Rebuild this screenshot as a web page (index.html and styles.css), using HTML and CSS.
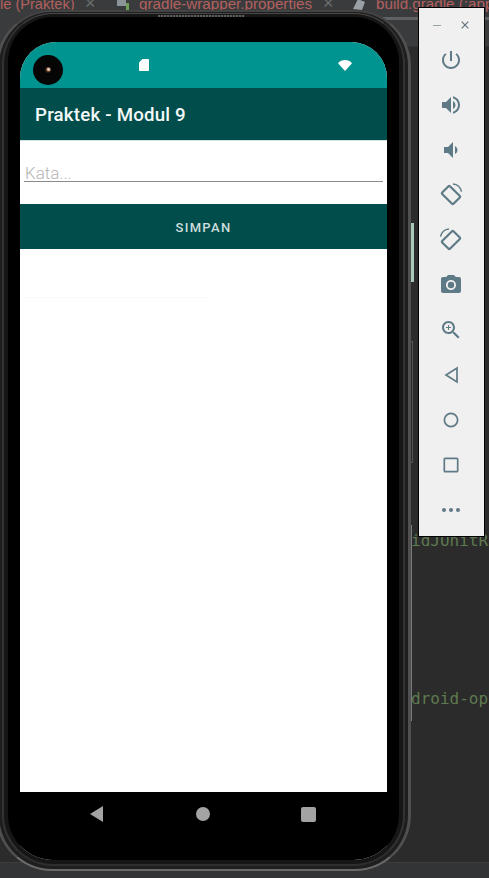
FILE: index.html
```html
<!DOCTYPE html>
<html>
<head>
    <title>Praktek - Modul 9</title>
    <link rel="stylesheet" href="styles.css">
</head>
<body>
    <div class="tabs">
        <span class="tab tab-first">le (Praktek)</span>
        <span class="tab-close close-first">&times;</span>
        <svg class="tab-icon" viewBox="0 0 14 14"><rect x="0" y="1" width="9" height="8" fill="#8a9499"/><rect x="9" y="6" width="3" height="8" fill="#6f9e55"/></svg>
        <span class="tab tab-second">gradle-wrapper.properties</span>
        <span class="tab-close close-second">&times;</span>
        <svg class="tab-icon icon-last" viewBox="0 0 14 14"><path d="M1 12L6 2l7 3-3 8z" fill="#9aa0a3"/></svg>
        <span class="tab tab-third">build.gradle (:app)</span>
        <span class="tab-underline"></span>
    </div>
    <div class="editor">
        <div class="code code-first">idJUnitR</div>
        <div class="code code-second">droid-op</div>
        <span class="gutter-line"></span>
    </div>
    <div class="statusbar"></div>

    <div class="phone">
        <div class="bezel-mid">
            <div class="speaker"></div>
            <div class="bezel">
                <div class="screen">
                    <div class="camera"><span class="lens"></span></div>
                    <div class="android-status">
                        <svg class="sd-icon" viewBox="0 0 10 12"><path d="M3.5 0H9a1 1 0 0 1 1 1v10a1 1 0 0 1-1 1H1a1 1 0 0 1-1-1V3.5z" fill="#fff"/></svg>
                        <svg class="wifi-icon" viewBox="0 0 14 11"><path d="M7 11L0 3.2C1.8 1.2 4.2 0 7 0s5.2 1.2 7 3.2z" fill="#fff"/></svg>
                    </div>
                    <div class="appbar">Praktek - Modul 9</div>
                    <div class="content">
                        <div class="field"><span class="placeholder">Kata...</span></div>
                        <div class="save-button">SIMPAN</div>
                        <div class="faint-row"></div>
                    </div>
                    <div class="nav">
                        <svg class="nav-back" viewBox="0 0 13 16"><path d="M13 0v16L0 8z" fill="#a3a3a3"/></svg>
                        <span class="nav-home"></span>
                        <span class="nav-recent"></span>
                    </div>
                </div>
            </div>
        </div>
    </div>
    <span class="side-button"></span>
    <span class="side-outline"></span>

    <div class="toolbar">
        <div class="toolbar-title">
            <span class="win-min"></span>
            <svg class="win-close" viewBox="0 0 8 8"><path d="M.7.7l6.6 6.6M7.3.7L.7 7.3" stroke="#62727b" stroke-width="1.2" fill="none"/></svg>
        </div>
        <svg class="tool" viewBox="0 0 24 24"><path d="M13 3h-2v10h2V3zm4.830 2.170l-1.420 1.420C17.990 7.860 19 9.810 19 12c0 3.870-3.130 7-7 7s-7-3.130-7-7c0-2.190 1.010-4.140 2.580-5.420L6.170 5.170C4.230 6.820 3 9.260 3 12c0 4.970 4.030 9 9 9s9-4.030 9-9c0-2.740-1.230-5.180-3.170-6.830z"/></svg>
        <svg class="tool" viewBox="0 0 24 24"><path d="M3 9v6h4l5 5V4L7 9H3zm13.500 3c0-1.770-1.020-3.290-2.500-4.030v8.050c1.480-.73 2.500-2.250 2.500-4.020zM14 3.230v2.060c2.890.86 5 3.540 5 6.710s-2.110 5.850-5 6.710v2.060c4.010-.91 7-4.490 7-8.770s-2.990-7.860-7-8.770z"/></svg>
        <svg class="tool" viewBox="0 0 24 24"><path d="M18.500 12c0-1.770-1.020-3.290-2.500-4.030v8.050c1.480-.73 2.500-2.250 2.500-4.020zM5 9v6h4l5 5V4L9 9H5z"/></svg>
        <svg class="tool" viewBox="0 0 24 24"><g class="line"><rect x="4" y="6.500" width="16" height="11" rx="1" transform="rotate(45 12 12)" stroke-width="2.200"/><path d="M14 1c4.200.3 7.700 3.500 8.500 7.700" stroke-width="1.600"/></g></svg>
        <svg class="tool" viewBox="0 0 24 24"><g class="line"><rect x="4" y="6.500" width="16" height="11" rx="1" transform="rotate(-45 12 12)" stroke-width="2.200"/><path d="M10 1C5.800 1.300 2.300 4.500 1.500 8.700" stroke-width="1.600"/></g></svg>
        <svg class="tool" viewBox="0 0 24 24"><circle cx="12" cy="12" r="3.200"/><path d="M9 2L7.170 4H4c-1.100 0-2 .9-2 2v12c0 1.100.9 2 2 2h16c1.100 0 2-.9 2-2V6c0-1.100-.9-2-2-2h-3.170L15 2H9zm3 15c-2.760 0-5-2.240-5-5s2.240-5 5-5 5 2.240 5 5-2.240 5-5 5z"/></svg>
        <svg class="tool" viewBox="0 0 24 24"><path d="M15.500 14h-.79l-.28-.27C15.410 12.590 16 11.110 16 9.500 16 5.910 13.090 3 9.500 3S3 5.910 3 9.500 5.910 16 9.500 16c1.610 0 3.090-.59 4.230-1.570l.27.28v.79l5 4.990L20.490 19l-4.990-5zm-6 0C7.010 14 5 11.990 5 9.500S7.010 5 9.500 5 14 7.010 14 9.500 11.990 14 9.500 14zM12 10h-2v2H9v-2H7V9h2V7h1v2h2v1z"/></svg>
        <svg class="tool" viewBox="0 0 24 24"><path class="line" d="M18 5v14L7 12z" stroke-width="1.700"/></svg>
        <svg class="tool" viewBox="0 0 24 24"><circle class="line" cx="12" cy="12" r="6.600" stroke-width="1.700"/></svg>
        <svg class="tool" viewBox="0 0 24 24"><rect class="line" x="5.300" y="5.300" width="13.400" height="13.400" rx="1" stroke-width="1.700"/></svg>
        <svg class="tool" viewBox="0 0 24 24"><circle cx="5" cy="12" r="2"/><circle cx="12" cy="12" r="2"/><circle cx="19" cy="12" r="2"/></svg>
    </div>
</body>
</html>
```

FILE: styles.css
```css
html, body {
    margin: 0;
    height: 878px;
    overflow: hidden;
}
body {
    display: flex;
    flex-direction: column;
    position: relative;
    background-color: #2b2b2b;
    font-family: Roboto, Arial, sans-serif;
}

/* ide behind the emulator */
.tabs {
    height: 46px;
    flex: none;
    position: relative;
    background-color: #3a3b3c;
    display: flex;
    align-items: flex-start;
    overflow: hidden;
    border-bottom: 1px solid #323232;
    font-family: "Liberation Sans", Arial, sans-serif;
    font-size: 14.6px;
    line-height: 14px;
    white-space: nowrap;
}
.tabs > * {
    flex: none;
}
.tab {
    color: #b4605f;
    margin-top: -3px;
}
.tab-first {
    width: 85px;
}
.tab-second {
    width: 184px;
    font-size: 15.2px;
}
.tab-third {
    font-size: 15.2px;
}
.tab-close {
    color: #6b6e70;
    font-size: 18px;
    margin-top: -4px;
}
.close-first {
    width: 32px;
}
.close-second {
    width: 29px;
}
.tab-icon {
    width: 14px;
    height: 14px;
    margin-top: -3px;
    margin-right: 8px;
}
.icon-last {
    margin-right: 10px;
}
.tab-underline {
    position: absolute;
    left: 350px;
    top: 17px;
    width: 139px;
    height: 3px;
    background-color: #5f6264;
}
.editor {
    flex: 1;
    position: relative;
    padding: 484px 0 0 411px;
    border-bottom: 1px solid #3d3d3d;
}
.code {
    font-family: "DejaVu Sans Mono", monospace;
    font-size: 16px;
    line-height: 20px;
    color: #5f7a50;
    white-space: nowrap;
}
.code-second {
    margin-top: 138px;
}
.gutter-line {
    position: absolute;
    left: 411px;
    top: 478px;
    width: 1px;
    height: 196px;
    background-color: #77797a;
}
.statusbar {
    height: 15px;
    flex: none;
    background-color: #333435;
}

/* emulator window */
.phone {
    position: absolute;
    left: -4px;
    top: 10px;
    width: 415px;
    height: 861px;
    box-sizing: border-box;
    padding: 1px 3px 3px 3px;
    border-style: solid;
    border-width: 2px 3px 2px 3px;
    border-color: #444 #505050 #6a6a6a #505050;
    border-radius: 56px;
    background-color: #1e1e1e;
}
.bezel-mid {
    height: 100%;
    box-sizing: border-box;
    position: relative;
    padding: 3px 4px 4px 4px;
    border-style: solid;
    border-width: 1px 2px 2px 2px;
    border-color: #484848 #333 #2e2e2e #333;
    border-radius: 51px;
    background-color: #161616;
}
.bezel {
    height: 100%;
    box-sizing: border-box;
    padding: 25px 12px 0 12px;
    border-radius: 45px;
    overflow: hidden;
    background-color: #000;
}
.speaker {
    position: absolute;
    left: 154px;
    top: 1px;
    width: 87px;
    height: 2px;
    background: repeating-linear-gradient(90deg, #5c5c5c 0 2px, #2c2c2c 2px 3px);
}
.screen {
    height: 100%;
    position: relative;
    display: flex;
    flex-direction: column;
    border-radius: 36px 36px 0 0;
    overflow: hidden;
    background-color: #fff;
}
.camera {
    position: absolute;
    left: 13px;
    top: 13px;
    width: 30px;
    height: 30px;
    border-radius: 50%;
    background-color: #050505;
    display: flex;
    align-items: center;
    justify-content: center;
}
.lens {
    width: 6px;
    height: 6px;
    border-radius: 50%;
    background: radial-gradient(circle at 60% 40%, #e0cdb8 0 1px, #7a4a30 2px, #2a1a12 3px);
}
.android-status {
    height: 46px;
    flex: none;
    box-sizing: border-box;
    background-color: #009490;
    display: flex;
    align-items: center;
    justify-content: space-between;
    padding: 0 35px 0 119px;
}
.sd-icon {
    width: 10px;
    height: 12px;
}
.wifi-icon {
    width: 14px;
    height: 11px;
}
.appbar {
    height: 52px;
    flex: none;
    box-sizing: border-box;
    padding-left: 15px;
    background-color: #004d4b;
    color: #f4f8f8;
    font-size: 18.7px;
    font-weight: 500;
    line-height: 55px;
    letter-spacing: 0.2px;
}
.content {
    flex: 1;
    border-top: 1px solid #cfe3e1;
}
.field {
    height: 63px;
    box-sizing: border-box;
    margin: 0 4px;
}
.placeholder {
    display: block;
    height: 41px;
    box-sizing: border-box;
    padding: 22px 0 0 1px;
    border-bottom: 1px solid #8a8a8a;
    font-size: 17px;
    font-weight: 300;
    line-height: 20px;
    color: #b4b4b4;
}
.save-button {
    height: 45px;
    background-color: #004d4b;
    color: #cfdedc;
    text-align: center;
    font-size: 13px;
    font-weight: 500;
    line-height: 47px;
    letter-spacing: 1.3px;
}
.faint-row {
    width: 186px;
    height: 1px;
    margin: 48px 0 0 4px;
    background-color: #fafafa;
}
.nav {
    height: 68px;
    flex: none;
    box-sizing: border-box;
    background-color: #000;
    display: flex;
    align-items: flex-start;
    padding: 14px 0 0 70px;
}
.nav-back {
    width: 13px;
    height: 16px;
}
.nav-home {
    width: 14px;
    height: 14px;
    margin: 1px 0 0 93px;
    border-radius: 50%;
    background-color: #a3a3a3;
}
.nav-recent {
    width: 15px;
    height: 15px;
    margin: 1px 0 0 91px;
    border-radius: 2px;
    background-color: #a3a3a3;
}
.side-button {
    position: absolute;
    left: 411px;
    top: 223px;
    width: 3px;
    height: 59px;
    background-color: #a9c9b6;
}
.side-outline {
    position: absolute;
    left: 410px;
    top: 341px;
    width: 2px;
    height: 120px;
    border: 1px solid #555;
    border-left: none;
}

/* side toolbar of the emulator */
.toolbar {
    position: absolute;
    left: 418px;
    top: 7px;
    width: 64px;
    height: 528px;
    padding-right: 1px;
    border: 1px solid #000;
    background-color: #f0f0f0;
    display: flex;
    flex-direction: column;
    align-items: center;
    gap: 21px;
}
.toolbar-title {
    align-self: stretch;
    height: 40px;
    margin-bottom: -21px;
    display: flex;
    align-items: center;
    justify-content: space-between;
    padding: 0 14px 6px 14px;
    box-sizing: border-box;
}
.win-min {
    width: 8px;
    height: 1px;
    background-color: #9aa3a8;
}
.win-close {
    width: 8px;
    height: 8px;
}
.tool {
    width: 24px;
    height: 24px;
    flex: none;
    fill: #5f7a87;
}
.line {
    fill: none;
    stroke: #5f7a87;
}
```
